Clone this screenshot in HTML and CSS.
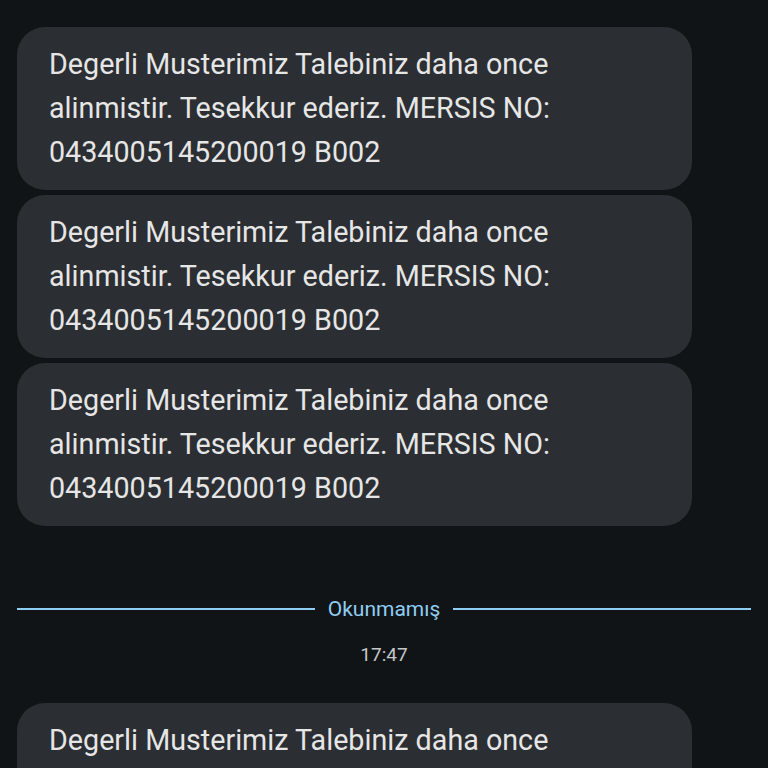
FILE: index.html
```html
<!DOCTYPE html>
<html lang="tr">
<head>
    <meta charset="UTF-8">
    <meta name="viewport" content="width=device-width, initial-scale=1.0">
    <title>Mesajlar</title>
    <link rel="stylesheet" href="styles.css">
</head>
<body>

    <div class="thread">
        <div class="bubble">Degerli Musterimiz Talebiniz daha once alinmistir. Tesekkur ederiz. MERSIS NO: 0434005145200019 B002</div>
        <div class="bubble">Degerli Musterimiz Talebiniz daha once alinmistir. Tesekkur ederiz. MERSIS NO: 0434005145200019 B002</div>
        <div class="bubble">Degerli Musterimiz Talebiniz daha once alinmistir. Tesekkur ederiz. MERSIS NO: 0434005145200019 B002</div>

        <div class="unread">
            <span class="line"></span>
            <span class="unread-label">Okunmamış</span>
            <span class="line"></span>
        </div>
        <div class="time">17:47</div>

        <div class="bubble">Degerli Musterimiz Talebiniz daha once alinmistir. Tesekkur ederiz. MERSIS NO: 0434005145200019 B002</div>
    </div>

</body>
</html>
```

FILE: styles.css
```css
body {
    margin: 0;
    padding: 0;
    height: 768px;
    background: #111417;
    font-family: Roboto, "Noto Sans", sans-serif;
    color: #e3e3e3;
    overflow: hidden;
}
.thread {
    display: flex;
    flex-direction: column;
    gap: 5px;
    padding: 27px 17px 0 17px;
}
.bubble {
    width: 675px;
    box-sizing: border-box;
    padding: 15px 100px 16px 32px;
    background: #2b2e32;
    border-radius: 28px;
    font-size: 28.7px;
    line-height: 44px;
    color: #e6e6e6;
}
.unread {
    display: flex;
    align-items: center;
    gap: 13px;
    margin-top: 66px;
}
.line {
    flex: 1;
    height: 2px;
    background: #8fcdf2;
}
.unread-label {
    font-size: 21px;
    color: #8fcdf2;
}
.time {
    text-align: center;
    font-size: 19px;
    color: #c4c7c8;
    margin-top: 17px;
    margin-bottom: 32px;
}
```
